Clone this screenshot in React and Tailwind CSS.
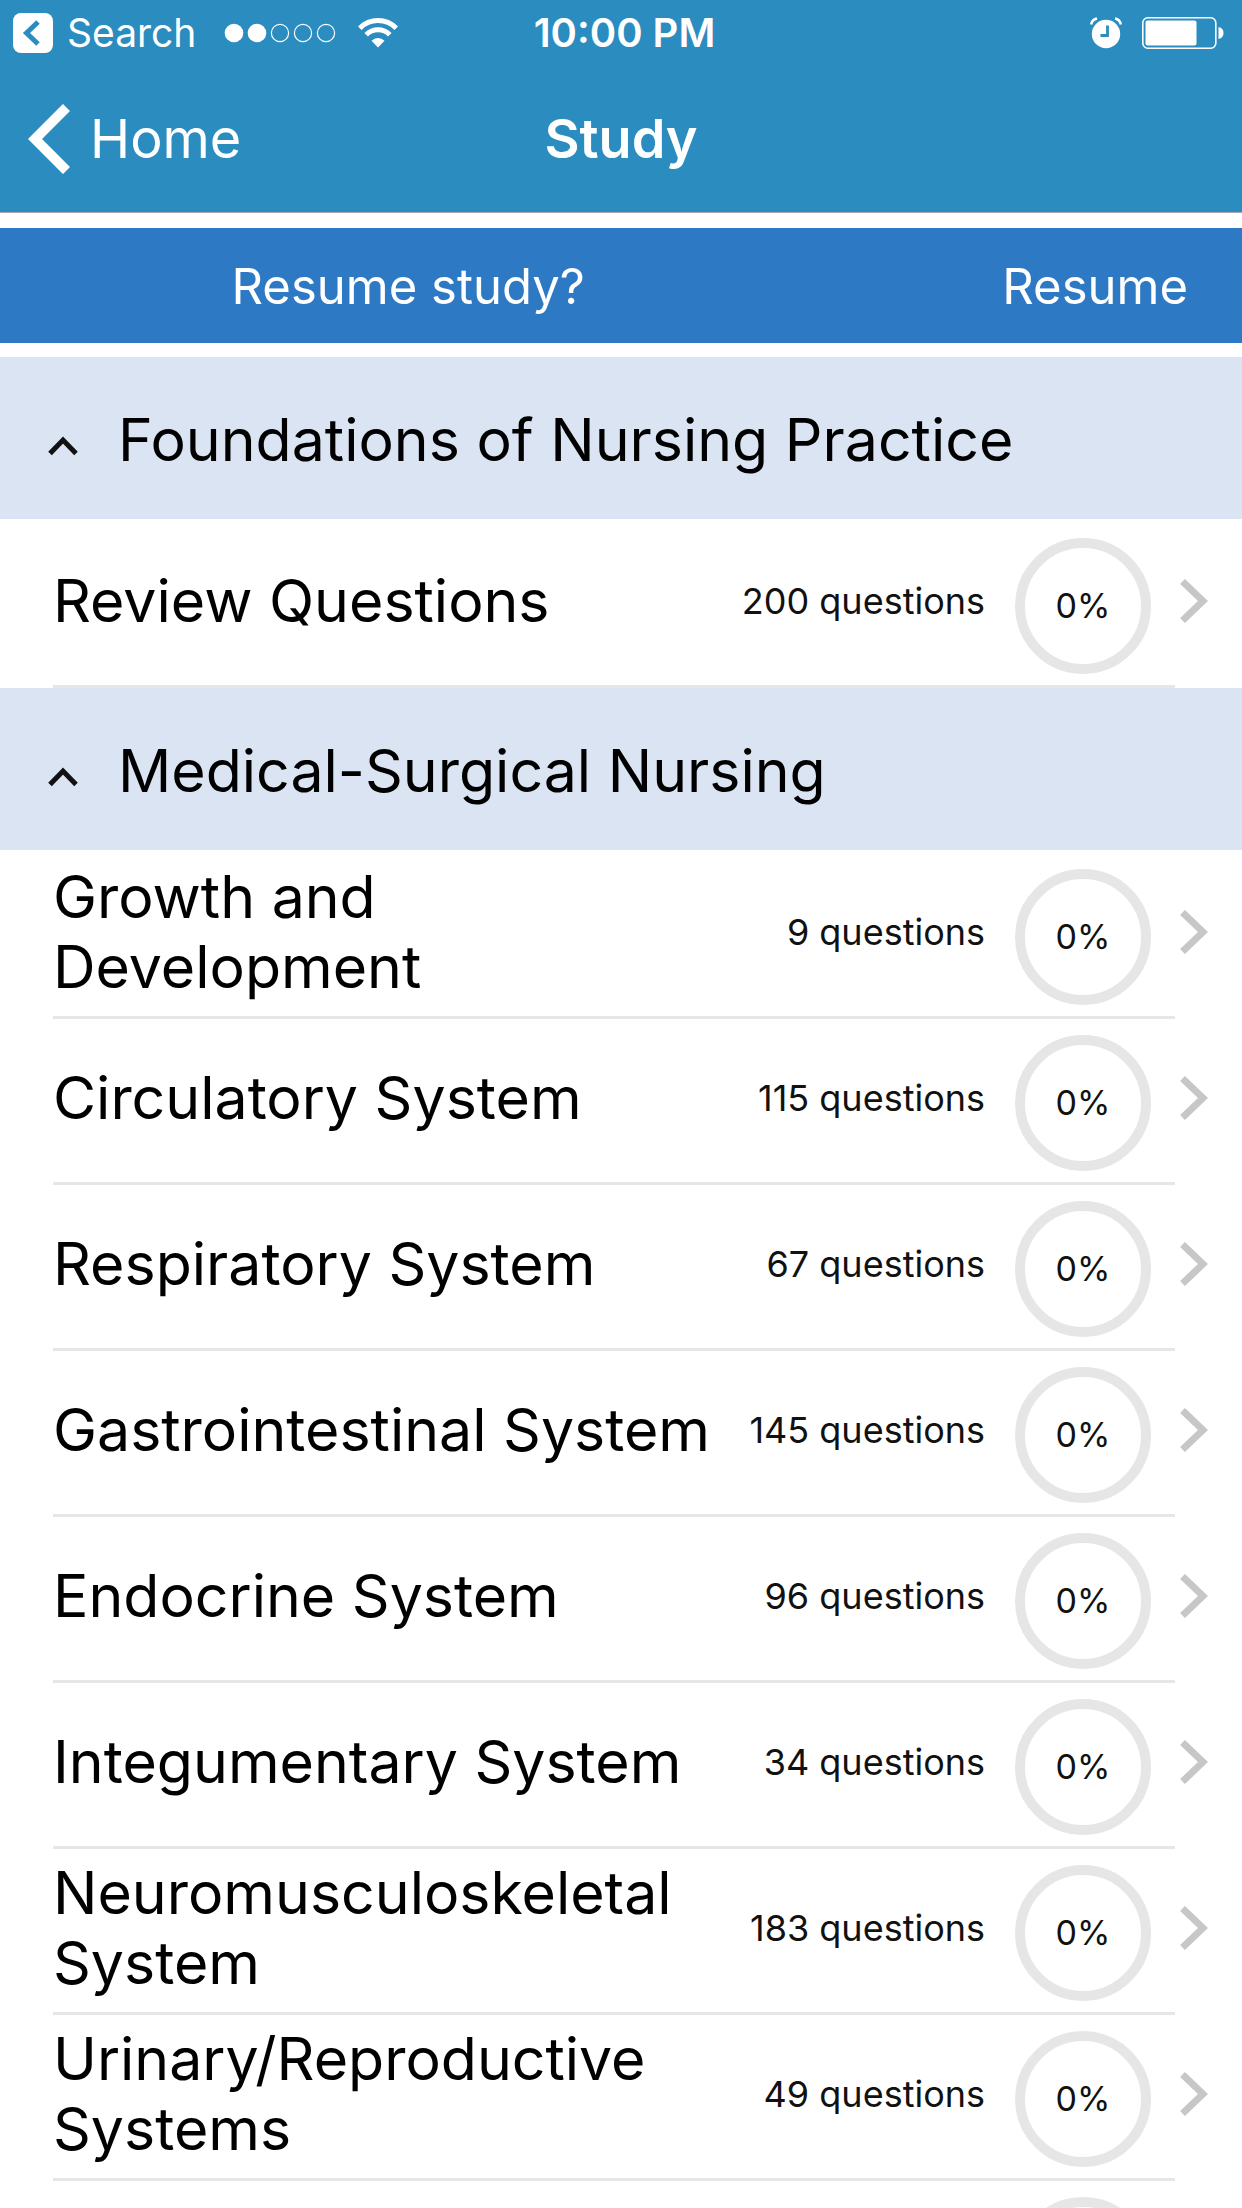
const sections = [
  {
    title: "Foundations of Nursing Practice",
    topics: [{ name: "Review Questions", count: 200, progress: 0 }],
  },
  {
    title: "Medical-Surgical Nursing",
    topics: [
      { name: "Growth and Development", count: 9, progress: 0 },
      { name: "Circulatory System", count: 115, progress: 0 },
      { name: "Respiratory System", count: 67, progress: 0 },
      { name: "Gastrointestinal System", count: 145, progress: 0 },
      { name: "Endocrine System", count: 96, progress: 0 },
      { name: "Integumentary System", count: 34, progress: 0 },
      { name: "Neuromusculoskeletal System", count: 183, progress: 0 },
      { name: "Urinary/Reproductive Systems", count: 49, progress: 0 },
      { name: "", count: null, progress: null },
    ],
  },
];

function StatusBar() {
  return (
    <div className="grid grid-cols-[1fr_auto_1fr] items-center h-[66px] pl-[13px] pr-[18px]">
      <div className="flex items-center">
        <a href="#search" className="flex items-center gap-[14px] text-[39px] leading-[48px]">
          <svg width="40" height="40" viewBox="0 0 40 40" aria-hidden="true">
            <rect width="40" height="40" rx="8" fill="#fff" />
            <path d="M25 9 L13.5 20 L25 31" fill="none" stroke="#2b8cbf" strokeWidth="5" />
          </svg>
          Search
        </a>

        {/* SIGNAL */}
        <svg className="ml-7" width="112" height="20" viewBox="0 0 112 20" aria-hidden="true">
          <circle cx="10" cy="10" r="9.3" fill="#fff" />
          <circle cx="33" cy="10" r="9.3" fill="#fff" />
          <g fill="none" stroke="#fff" strokeWidth="1.2">
            <circle cx="56" cy="10" r="8.6" />
            <circle cx="79" cy="10" r="8.6" />
            <circle cx="102" cy="10" r="8.6" />
          </g>
        </svg>

        {/* WIFI */}
        <svg className="ml-[22px]" width="40" height="30" viewBox="0 0 40 30" aria-hidden="true">
          <g fill="none" stroke="#fff" strokeWidth="5">
            <path d="M1.8 10.2 A25.5 25.5 0 0 1 38.2 10.2" />
            <path d="M8.2 16.8 A16.5 16.5 0 0 1 31.8 16.8" />
          </g>
          <path d="M13.5 22.8 A9.2 9.2 0 0 1 26.5 22.8 L20 29.5 Z" fill="#fff" />
        </svg>
      </div>

      <p className="pl-3 text-[40px] leading-[48px] font-semibold">10:00 PM</p>

      <div className="flex items-center justify-end gap-5">
        {/* ALARM */}
        <svg width="32" height="32" viewBox="0 0 32 32" aria-hidden="true">
          <circle cx="16" cy="17" r="14.2" fill="#fff" />
          <path d="M17.5 8.5 V18.5 H10.5" fill="none" stroke="#2b8cbf" strokeWidth="2.8" />
          <path d="M1.2 7.5 Q2 2.5 7 1.5 M30.8 7.5 Q30 2.5 25 1.5" fill="none" stroke="#fff" strokeWidth="2.4" />
        </svg>

        {/* BATTERY */}
        <svg width="82" height="32" viewBox="0 0 82 32" aria-hidden="true">
          <rect x="0.8" y="0.8" width="73" height="30.4" rx="5" fill="none" stroke="#fff" strokeWidth="1.6" />
          <rect x="3.5" y="3.5" width="51" height="25" rx="2" fill="#fff" />
          <path d="M76.5 10 Q81.5 11 81.5 16 Q81.5 21 76.5 22 Z" fill="#fff" />
        </svg>
      </div>
    </div>
  );
}

function ProgressRing({ value }) {
  return (
    <div className="mt-[10px] flex h-[136px] w-[136px] shrink-0 items-center justify-center rounded-full border-[10px] border-[#e6e6e6] text-[34px] leading-[44px] text-[#111]">
      {value !== null && `${value}%`}
    </div>
  );
}

function TopicRow({ topic }) {
  return (
    <li className="relative">
      <a href="#topic" className="flex h-[166px] items-center pb-[9px] pl-[53px] pr-[34px]">
        <span className="max-w-[676px] text-[59px] leading-[70px]">{topic.name}</span>
        <span className="ml-auto mr-[30px] shrink-0 text-[36px] leading-[44px] text-[#111]">
          {topic.count !== null && `${topic.count} questions`}
        </span>
        <ProgressRing value={topic.progress} />
        <svg className="ml-[29px] shrink-0" width="28" height="44" viewBox="0 0 28 44" aria-hidden="true">
          <path d="M2.5 2.5 L23 22 L2.5 41.5" fill="none" stroke="#c7c7c7" strokeWidth="7" />
        </svg>
      </a>
      <div className="absolute bottom-0 left-[53px] right-[67px] h-[3px] bg-[#e6e6e6]" />
    </li>
  );
}

function Section({ section }) {
  return (
    <section>
      <h2>
        <button className="flex h-[162px] w-full items-center bg-[#dae4f2] pl-12 pt-1 text-left text-[59px] leading-[70px]">
          <svg className="mt-3 mr-10" width="30" height="20" viewBox="0 0 30 20" aria-hidden="true">
            <path d="M2 17.5 L15 4 L28 17.5" fill="none" stroke="#111" strokeWidth="5" />
          </svg>
          {section.title}
        </button>
      </h2>
      <ul className="pt-[3px]">
        {section.topics.map((topic) => (
          <TopicRow key={topic.name} topic={topic} />
        ))}
      </ul>
    </section>
  );
}

export default function StudyPage() {
  return (
    <div className="h-screen overflow-hidden bg-white font-[Inter,'Liberation_Sans',sans-serif] text-black">

      <header className="border-b border-[#a9a9b0] bg-[#2b8cbf] text-white">
        <StatusBar />
        <nav className="grid h-[146px] grid-cols-[1fr_auto_1fr] items-center px-7">
          <a href="#home" className="flex items-center gap-5 text-[54px] leading-[64px]">
            <svg width="42" height="70" viewBox="0 0 42 70" aria-hidden="true">
              <path d="M38.5 3.5 L7 35 L38.5 66.5" fill="none" stroke="#fff" strokeWidth="10" />
            </svg>
            Home
          </a>
          <h1 className="text-[54px] leading-[64px] font-semibold">Study</h1>
        </nav>
      </header>

      <div className="mt-[15px] mb-[14px] flex h-[115px] items-center bg-[#2e79c4] pt-[2px] pr-[54px] text-[49px] leading-[56px] text-white">
        <p className="flex-1 pl-6 pr-[210px] text-center">Resume study?</p>
        <button>Resume</button>
      </div>

      {sections.map((section) => (
        <Section key={section.title} section={section} />
      ))}

    </div>
  );
}
